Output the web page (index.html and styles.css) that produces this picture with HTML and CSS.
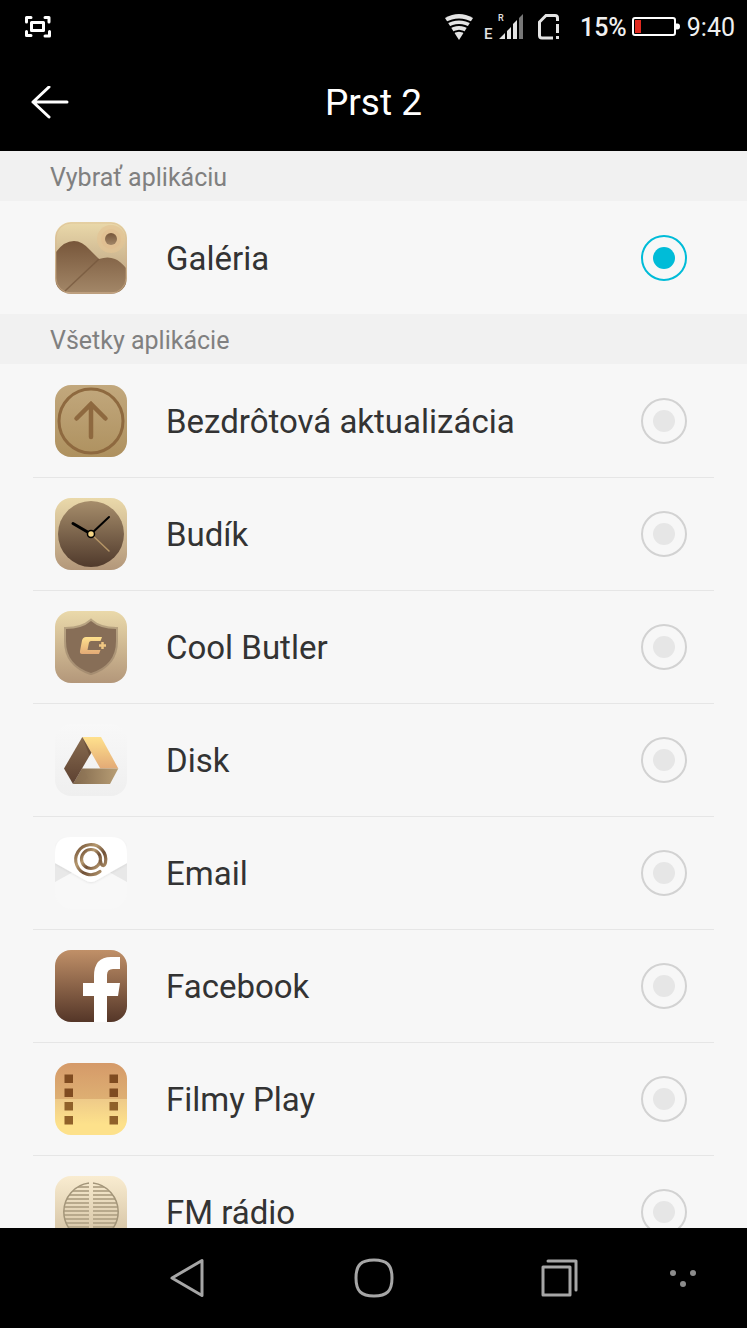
FILE: index.html
```html
<!DOCTYPE html>
<html lang="sk">
<head>
    <meta charset="UTF-8">
    <meta name="viewport" content="width=device-width, initial-scale=1.0">
    <title>Prst 2</title>
    <link rel="stylesheet" href="styles.css">
</head>
<body>
    <div class="status-bar">
        <svg class="scan" width="26" height="22" viewBox="0 0 26 22" fill="none" stroke="#fff" stroke-width="3" stroke-linecap="round" stroke-linejoin="round">
            <path d="M1.500 6V1.500H6M20 1.500h4V6M1.500 15.500v4H6M20 20h4.500v-4.500"/>
            <rect x="6.500" y="6.500" width="12" height="8"/>
        </svg>
        <svg class="wifi" width="28" height="26" viewBox="0 0 28 26">
            <path d="M0 4Q14-4 28 4L14 26z" fill="#e4e4e4"/>
            <path d="M0 9.500Q14 1.500 28 9.500M2 15Q14 7 26 15M6 20Q14 13.500 22 20" fill="none" stroke="#000" stroke-width="2"/>
        </svg>
        <svg class="signal" width="40" height="26" viewBox="0 0 40 26">
            <text class="net-type" x="0" y="25">E</text>
            <text class="roaming" x="14" y="7">R</text>
            <path d="M15 25l6-6v6zM23 17l4-4v12h-4zM29 10l4-4v19h-4z" fill="#e4e4e4"/>
            <path d="M35 4l4-4v25h-4z" fill="#777"/>
        </svg>
        <svg class="sim" width="22" height="26" viewBox="0 0 22 26" fill="none" stroke="#e4e4e4" stroke-width="3">
            <path d="M15 24H4q-2.500 0-2.500-2.500V8L8 1.500h9q2.500 0 2.500 2.500v3M19.500 10v9M19.500 22v3"/>
        </svg>
        <span class="percent">15%</span>
        <svg class="battery" width="48" height="20" viewBox="0 0 48 20">
            <rect x="1" y="1" width="42" height="17" rx="2" fill="none" stroke="#fff" stroke-width="2"/>
            <path d="M44 6.500h1.500q2.500 0 2.500 3t-2.500 3H44z" fill="#fff"/>
            <rect x="3" y="3" width="6" height="13" fill="#e02a20"/>
        </svg>
        <time class="clock">9:40</time>
    </div>

    <header class="title-bar">
        <a class="back" href="#" aria-label="Späť">
            <svg width="38" height="34" viewBox="0 0 38 34" fill="none" stroke="#fff" stroke-width="3" stroke-linecap="round" stroke-linejoin="round">
                <path d="M18 1L2 16l16 15M2 16h34"/>
            </svg>
        </a>
        <h1>Prst 2</h1>
    </header>

    <main class="apps">
        <h2>Vybrať aplikáciu</h2>
        <ul>
            <li>
                <label class="app">
                    <svg class="app-icon" viewBox="0 0 72 72">
                        <defs>
                            <clipPath id="tile"><rect width="72" height="72" rx="16"/></clipPath>
                            <linearGradient id="sand" x2="0" y2="1"><stop stop-color="#ead9aa"/><stop offset="1" stop-color="#b3977a"/></linearGradient>
                            <linearGradient id="hill" x2="0" y2="1"><stop stop-color="#77563a"/><stop offset="1" stop-color="#a28667"/></linearGradient>
                        </defs>
                        <g clip-path="url(#tile)">
                            <rect width="72" height="72" fill="url(#sand)"/>
                            <circle cx="56" cy="17" r="14" fill="#e2c394" opacity=".7"/>
                            <circle cx="56" cy="17" r="10" fill="#e0b98b" opacity=".4"/>
                            <circle cx="56" cy="17" r="6" fill="url(#hill)"/>
                            <path d="M1 30Q9 19 19 19q8 0 16 9l9 9q9-3 16 0 5 2 11 9v24H1z" fill="url(#hill)"/>
                            <path d="M44 37L10 69" stroke="#74563c" stroke-width="1.500" opacity=".7"/>
                        </g>
                        <rect x="1" y="1" width="70" height="70" rx="15" fill="none" stroke="#d8b48c" stroke-width="1" opacity=".5"/>
                    </svg>
                    <span class="app-name">Galéria</span>
                    <input type="radio" name="app" checked>
                </label>
            </li>
        </ul>

        <h2>Všetky aplikácie</h2>
        <ul>
            <li>
                <label class="app">
                    <svg class="app-icon" viewBox="0 0 72 72">
                        <defs>
                            <linearGradient id="update" x2="0" y2="1"><stop stop-color="#c2a87d"/><stop offset="1" stop-color="#ae915f"/></linearGradient>
                        </defs>
                        <rect width="72" height="72" rx="16" fill="url(#update)"/>
                        <g fill="none" stroke="#8e693f">
                            <circle cx="36" cy="36" r="32" stroke-width="3"/>
                            <path d="M36 52V19M21.500 33.500L36 19l14.500 14.500" stroke-width="4.500" stroke-linecap="round"/>
                        </g>
                    </svg>
                    <span class="app-name">Bezdrôtová aktualizácia</span>
                    <input type="radio" name="app">
                </label>
            </li>
            <li>
                <label class="app">
                    <svg class="app-icon" viewBox="0 0 72 72">
                        <defs>
                            <linearGradient id="dial" x2="0" y2="1"><stop stop-color="#a68d6b"/><stop offset="1" stop-color="#503a2c"/></linearGradient>
                        </defs>
                        <rect width="72" height="72" rx="16" fill="url(#sand)"/>
                        <circle cx="36" cy="36" r="33" fill="url(#dial)"/>
                        <g stroke-linecap="round">
                            <path d="M36 36l18 17" stroke="#b59566" stroke-width="1.500"/>
                            <path d="M36 36l18-17" stroke="#000" stroke-width="2"/>
                            <path d="M36 36L18 25.500" stroke="#000" stroke-width="3"/>
                        </g>
                        <circle cx="36" cy="36" r="3.500" fill="#f5d586" stroke="#000" stroke-width="1.500"/>
                    </svg>
                    <span class="app-name">Budík</span>
                    <input type="radio" name="app">
                </label>
            </li>
            <li>
                <label class="app">
                    <svg class="app-icon" viewBox="0 0 72 72">
                        <defs>
                            <linearGradient id="gold" x2="0" y2="1"><stop stop-color="#ffe18d"/><stop offset="1" stop-color="#e3aa76"/></linearGradient>
                        </defs>
                        <rect width="72" height="72" rx="16" fill="url(#sand)"/>
                        <path d="M36 10q9 8 25 8v12q0 24-25 32Q11 54 11 30V18q16 0 25-8z" fill="#876e57" stroke="#8f7a62" stroke-opacity=".5" stroke-width="4" paint-order="stroke"/>
                        <path d="M31 26h16l-1.500 4H36q-1.500 0-2 1.500L32.500 39h13L44 43H27q-2.500 0-2-3l2-10.500q.8-3.500 4-3.500z" fill="url(#gold)"/>
                        <path d="M47.500 30v9M43 34.500h9" stroke="#876e57" stroke-width="5"/>
                        <path d="M47.500 31v7M44 34.500h7" stroke="#efc783" stroke-width="2.500"/>
                    </svg>
                    <span class="app-name">Cool Butler</span>
                    <input type="radio" name="app">
                </label>
            </li>
            <li>
                <label class="app">
                    <svg class="app-icon" viewBox="0 0 72 72">
                        <defs>
                            <linearGradient id="disk" x2="0" y2="1"><stop stop-color="#f8f8f8"/><stop offset="1" stop-color="#efefef"/></linearGradient>
                            <linearGradient id="disk-left" x2="0" y2="1"><stop stop-color="#886c50"/><stop offset="1" stop-color="#5d4131"/></linearGradient>
                            <linearGradient id="disk-base"><stop stop-color="#81684c"/><stop offset="1" stop-color="#b89e75"/></linearGradient>
                        </defs>
                        <rect width="72" height="72" rx="16" fill="url(#disk)"/>
                        <path d="M27.300 13H46l17.300 31.500h-18z" fill="url(#gold)"/>
                        <path d="M27 44.500h36.300L55 60H18z" fill="url(#disk-base)"/>
                        <path d="M27.300 44.500L33 54l-15 6z" fill="#8f7557" opacity=".4"/>
                        <path d="M27.300 13l9 15.700L18 60 9 44.500z" fill="url(#disk-left)"/>
                        <path d="M27.300 13l9 15.700-1.800 3z" fill="#60442f" opacity=".6"/>
                    </svg>
                    <span class="app-name">Disk</span>
                    <input type="radio" name="app">
                </label>
            </li>
            <li>
                <label class="app">
                    <svg class="app-icon" viewBox="0 0 72 72">
                        <defs>
                            <linearGradient id="bronze" x2="1" y2="1"><stop stop-color="#69482e"/><stop offset=".35" stop-color="#b79a70"/><stop offset=".6" stop-color="#6f5037"/><stop offset="1" stop-color="#c4a67a"/></linearGradient>
                            <filter id="flap-shadow"><feDropShadow dx="0" dy="1" stdDeviation="1" flood-opacity=".08"/></filter>
                        </defs>
                        <rect width="72" height="72" rx="16" fill="#f8f8f8"/>
                        <path d="M0 26l18 9L0 45zM72 26l-18 9 18 10z" fill="#e8e8e8"/>
                        <path d="M16 0h40q16 0 16 16v10L42 43q-6 4-12 0L0 26V16Q0 0 16 0z" fill="#fff" filter="url(#flap-shadow)"/>
                        <g fill="none" stroke="url(#bronze)" stroke-width="3.200" stroke-linecap="round">
                            <circle cx="36" cy="22" r="9.500"/>
                            <path d="M45 34.500A15 15 0 1 1 50.500 25.500Q49.500 29 48 28.500 46 28 45.500 24"/>
                        </g>
                    </svg>
                    <span class="app-name">Email</span>
                    <input type="radio" name="app">
                </label>
            </li>
            <li>
                <label class="app">
                    <svg class="app-icon" viewBox="0 0 72 72">
                        <defs>
                            <linearGradient id="copper" x2="0" y2="1"><stop stop-color="#c09068"/><stop offset="1" stop-color="#543628"/></linearGradient>
                        </defs>
                        <rect width="72" height="72" rx="16" fill="url(#copper)"/>
                        <path d="M39 72V46H28V33h11v-7Q39 7 56 7h9v12h-7q-6 0-6 6v8h13l-2 13H52v26z" fill="#fff"/>
                    </svg>
                    <span class="app-name">Facebook</span>
                    <input type="radio" name="app">
                </label>
            </li>
            <li>
                <label class="app">
                    <svg class="app-icon" viewBox="0 0 72 72">
                        <defs>
                            <linearGradient id="film-top" x2="0" y2="1"><stop stop-color="#d59a69"/><stop offset="1" stop-color="#deb073"/></linearGradient>
                            <linearGradient id="film-bottom" x2="0" y2="1"><stop stop-color="#eeca89"/><stop offset=".7" stop-color="#fde18b"/></linearGradient>
                        </defs>
                        <g clip-path="url(#tile)">
                            <rect width="72" height="37" fill="url(#film-top)"/>
                            <rect y="36" width="72" height="36" fill="url(#film-bottom)"/>
                        </g>
                        <path d="M9.500 11.500h8.500v8.500H9.500zM54.500 11.500h8.500v8.500h-8.500zM9.500 25.500h8.500V34H9.500zM54.500 25.500h8.500V34h-8.500z" fill="#7f4b20"/>
                        <path d="M9.500 39h8.500v8.500H9.500zM54.500 39h8.500v8.500h-8.500zM9.500 53h8.500v8.500H9.500zM54.500 53h8.500v8.500h-8.500z" fill="#906129"/>
                    </svg>
                    <span class="app-name">Filmy Play</span>
                    <input type="radio" name="app">
                </label>
            </li>
            <li>
                <label class="app">
                    <svg class="app-icon" viewBox="0 0 72 72">
                        <defs>
                            <linearGradient id="radio" x2="0" y2="1"><stop stop-color="#f9ecd0"/><stop offset="1" stop-color="#cdbb9c"/></linearGradient>
                            <pattern id="grille" width="4" height="4" y="2" patternUnits="userSpaceOnUse"><rect width="4" height="2" fill="#b8a98c"/></pattern>
                        </defs>
                        <rect width="72" height="72" rx="16" fill="url(#radio)"/>
                        <g fill="url(#grille)" stroke="#a39579" stroke-width="1.500">
                            <path d="M34 64.500A29 29 0 0 1 34 7" stroke-linecap="butt"/>
                            <path d="M38 7A29 29 0 0 1 38 64.500"/>
                        </g>
                    </svg>
                    <span class="app-name">FM rádio</span>
                    <input type="radio" name="app">
                </label>
            </li>
        </ul>
    </main>

    <nav class="nav-bar">
        <button type="button" aria-label="Späť">
            <svg width="34" height="40" viewBox="0 0 34 40"><path d="M32 2.500v35L2 20z"/></svg>
        </button>
        <button type="button" aria-label="Domov">
            <svg width="40" height="40" viewBox="0 0 40 40"><path d="M20 2C33 2 38 7 38 20S33 38 20 38 2 33 2 20 7 2 20 2z"/></svg>
        </button>
        <button type="button" aria-label="Posledné aplikácie">
            <svg width="38" height="38" viewBox="0 0 38 38"><path d="M2 8h27v28H2zM7 2h28v29"/></svg>
        </button>
        <button type="button" class="more" aria-label="Viac">
            <svg width="28" height="20" viewBox="0 0 28 20"><circle cx="4" cy="5" r="3"/><circle cx="24" cy="5" r="3"/><circle cx="14" cy="16" r="3"/></svg>
        </button>
    </nav>
</body>
</html>
```
FILE: styles.css
```css
* {
    box-sizing: border-box;
}
body {
    display: flex;
    flex-direction: column;
    height: 100vh;
    margin: 0;
    font-family: Roboto, 'Noto Sans', sans-serif;
    background-color: #f7f7f7;
    color: #333;
}
svg {
    display: block;
    flex-shrink: 0;
}
.status-bar {
    display: flex;
    flex-shrink: 0;
    align-items: center;
    height: 54px;
    padding: 0 12px 0 25px;
    background-color: #000;
    color: #f0f0f0;
    font-size: 25px;
}
.scan {
    margin-right: auto;
}
.signal {
    margin: 0 14px 0 11px;
    overflow: visible;
}
.percent {
    margin: 0 5px 0 20px;
    font-weight: 500;
}
.battery {
    margin-right: 7px;
}
.net-type,
.roaming {
    fill: #e4e4e4;
    font-size: 15px;
    font-weight: 500;
}
.roaming {
    font-size: 9px;
}
.title-bar {
    display: grid;
    flex-shrink: 0;
    grid-template-columns: 1fr auto 1fr;
    align-items: center;
    height: 97px;
    padding: 0 31px;
    background-color: #000;
    color: #fff;
}
.back {
    justify-self: start;
}
h1 {
    margin: 0;
    font-size: 37px;
    font-weight: 400;
}
.apps {
    flex: 1;
    min-height: 0;
    overflow-y: auto;
    scrollbar-width: none;
}
h2 {
    height: 50px;
    margin: 0;
    padding: 0 50px;
    background-color: #f1f1f1;
    color: #808080;
    font-size: 25px;
    font-weight: 400;
    line-height: 54px;
}
ul {
    margin: 0;
    padding: 0 33px;
    list-style: none;
}
li {
    border-top: 1px solid #e6e6e6;
}
li:first-child {
    border-top-color: transparent;
}
.app {
    display: flex;
    align-items: center;
    height: 112px;
    padding: 0 27px 0 22px;
    cursor: pointer;
}
.app-icon {
    width: 72px;
    height: 72px;
    margin-right: 39px;
}
.app-name {
    flex: 1;
    font-size: 33px;
}
input[type="radio"] {
    appearance: none;
    width: 46px;
    height: 46px;
    margin: 0;
    border: 2px solid #d2d2d2;
    border-radius: 50%;
    padding: 10px;
    background-color: #e6e6e6;
    background-clip: content-box;
}
input[type="radio"]:checked {
    border-color: #00bcd8;
    background-color: #00bcd8;
}
.nav-bar {
    display: grid;
    flex-shrink: 0;
    grid-template-columns: 1fr 2fr 2fr 2fr 1fr;
    height: 100px;
    background-color: #000;
}
.nav-bar button {
    display: flex;
    align-items: center;
    justify-content: center;
    padding: 0;
    border: none;
    background: none;
    cursor: pointer;
}
.nav-bar button:first-child {
    grid-column: 2;
}
.nav-bar path {
    fill: none;
    stroke: #a6a6a6;
    stroke-width: 3;
    stroke-linejoin: round;
    stroke-linecap: round;
}
.nav-bar circle {
    fill: #8c8c8c;
}
.nav-bar .more {
    justify-content: flex-start;
    padding-left: 15px;
}
```
